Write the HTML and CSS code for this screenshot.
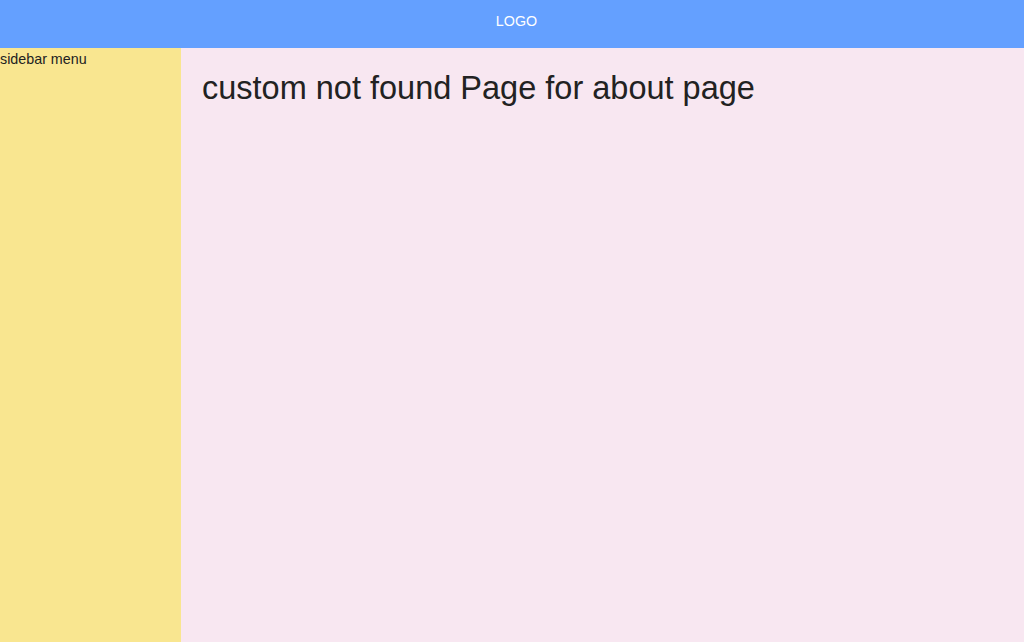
FILE: index.html
```html
<!DOCTYPE html>
<html lang="en">
<head>
    <meta charset="UTF-8">
    <meta name="viewport" content="width=device-width, initial-scale=1.0">
    <title>About</title>
    <link rel="stylesheet" href="styles.css">
</head>
<body>
    <header class="header">LOGO</header>
    <div class="layout">
        <aside class="sidebar">sidebar menu</aside>
        <main class="content">
            <h1>custom not found Page for about page</h1>
        </main>
    </div>
</body>
</html>
```

FILE: styles.css
```css
* { box-sizing: border-box; }
html, body { height: 100%; }
body {
    margin: 0;
    font-family: "Liberation Sans", Arial, sans-serif;
    font-size: 14px;
    color: #222;
    display: flex;
    flex-direction: column;
}
.header {
    height: 48px;
    line-height: 42px;
    padding-left: 9px;
    background: #64a0ff;
    color: #fff;
    font-size: 14.3px;
    text-align: center;
    flex-shrink: 0;
}
.layout { flex: 1; display: flex; }
.sidebar {
    width: 181px;
    background: #f9e690;
    padding-top: 3px;
    font-size: 14.3px;
}
.content {
    flex: 1;
    background: #f8e7f1;
    padding: 0 21px;
}
.content h1 {
    font-size: 32.5px;
    font-weight: normal;
    margin: 22px 0;
}
```
